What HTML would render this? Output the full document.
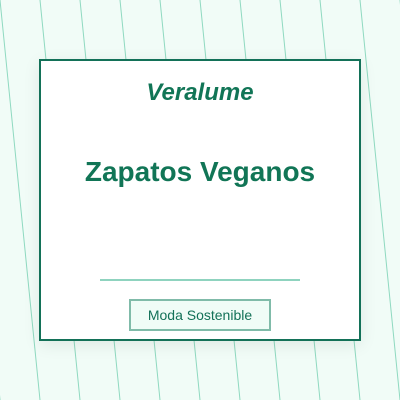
<!DOCTYPE html>
<html><head><style>
body{margin:0;width:400px;height:400px;background:#f1fcf7;position:relative;overflow:hidden;font-family:"Liberation Sans",sans-serif}
svg{position:absolute;left:0;top:0}
.card{position:absolute;left:39px;top:59px;width:318px;height:278px;border:2px solid #137158;background:#fff;box-shadow:0 4px 16px rgba(0,0,0,0.08)}
.brand{position:absolute;left:0;right:0;top:79px;text-align:center;font-style:italic;font-weight:bold;font-size:24px;color:#117556}
.title{position:absolute;left:0;right:0;top:156px;text-align:center;font-weight:bold;font-size:28px;color:#117556}
.rule{position:absolute;left:100px;top:279px;width:200px;height:2px;background:#8fd3bf}
.badge{position:absolute;left:129px;top:299px;width:138px;height:28px;border:2px solid #80bba9;background:#f0fcf7;text-align:center;line-height:28px;font-size:14px;color:#137158}
</style></head><body>
<svg width="400" height="400">
<g stroke="#8fd9c0" stroke-width="1">
<line x1="-40" y1="0" x2="0" y2="400"/>
<line x1="0" y1="0" x2="40" y2="400"/>
<line x1="40" y1="0" x2="80" y2="400"/>
<line x1="80" y1="0" x2="120" y2="400"/>
<line x1="120" y1="0" x2="160" y2="400"/>
<line x1="160" y1="0" x2="200" y2="400"/>
<line x1="200" y1="0" x2="240" y2="400"/>
<line x1="240" y1="0" x2="280" y2="400"/>
<line x1="280" y1="0" x2="320" y2="400"/>
<line x1="320" y1="0" x2="360" y2="400"/>
<line x1="360" y1="0" x2="400" y2="400"/>
<line x1="400" y1="0" x2="440" y2="400"/>
</g></svg>
<div class="card"></div>
<div class="brand">Veralume</div>
<div class="title">Zapatos Veganos</div>
<div class="rule"></div>
<div class="badge">Moda Sostenible</div>
</body></html>
